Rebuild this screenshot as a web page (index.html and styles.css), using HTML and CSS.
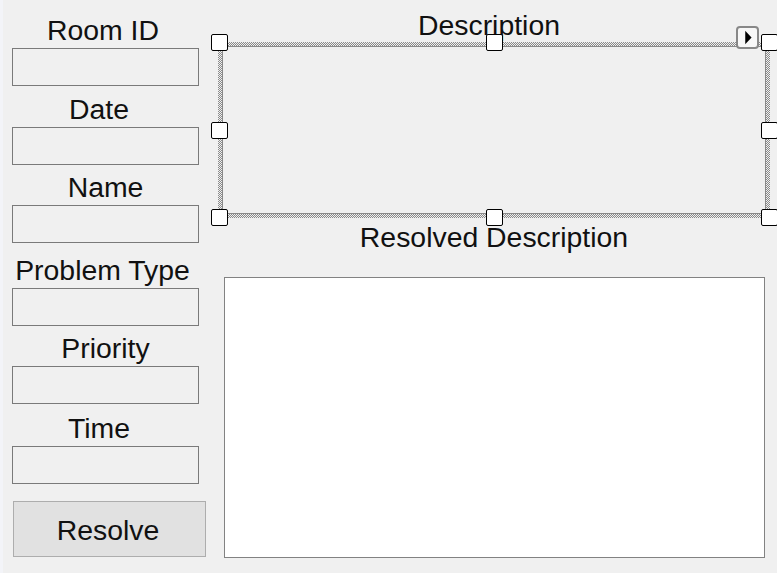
FILE: index.html
```html
<!DOCTYPE html>
<html>
<head>
<meta charset="utf-8">
<link rel="stylesheet" href="styles.css">
</head>
<body>
<div class="form">
  <div class="side">
    <div class="field"><div class="label">Room ID</div><div class="box"></div></div>
    <div class="field"><div class="label">Date</div><div class="box"></div></div>
    <div class="field"><div class="label">Name</div><div class="box"></div></div>
    <div class="field"><div class="label">Problem Type</div><div class="box"></div></div>
    <div class="field"><div class="label">Priority</div><div class="box"></div></div>
    <div class="field"><div class="label">Time</div><div class="box"></div></div>
    <div class="button">Resolve</div>
  </div>
  <div class="main">
    <div class="label desc-label">Description</div>
    <div class="selection">
      <div class="desc-box"></div>
      <div class="handle h-tl"></div>
      <div class="handle h-tm"></div>
      <div class="handle h-tr"></div>
      <div class="handle h-ml"></div>
      <div class="handle h-mr"></div>
      <div class="handle h-bl"></div>
      <div class="handle h-bm"></div>
      <div class="handle h-br"></div>
      <div class="smart-tag">
        <svg width="21" height="21" viewBox="0 0 21 21"><path d="M8 3 L15 10.5 L8 18 Z" fill="#000"/></svg>
      </div>
    </div>
    <div class="label res-label">Resolved Description</div>
    <div class="res-box"></div>
  </div>
</div>
</body>
</html>
```

FILE: styles.css
```css
html, body {
  margin: 0;
  padding: 0;
  background: #f0f0f0;
}
body {
  width: 777px;
  height: 573px;
  overflow: hidden;
  font-family: "Liberation Sans", Arial, sans-serif;
  font-size: 28.4px;
  color: #111;
  border-left: 3px solid #f3f4f8;
  box-sizing: border-box;
}
.form {
  display: flex;
  align-items: flex-start;
}
.side {
  width: 194px;
  margin-left: 9px;
  padding-top: 13px;
  display: flex;
  flex-direction: column;
}
.label {
  height: 31px;
  padding-top: 1px;
  line-height: 32px;
  text-align: center;
  white-space: nowrap;
}
.field {
  width: 187px;
  display: flex;
  flex-direction: column;
}
.field:nth-child(2) { margin-top: 6px; }
.field:nth-child(3) { margin-top: 5px; }
.field:nth-child(4) { margin-top: 10px; }
.field:nth-child(5) { margin-top: 5px; }
.field:nth-child(6) { margin-top: 7px; }
.field:nth-child(1) .label { padding-right: 5px; }
.field:nth-child(2) .label { padding-right: 13px; }
.field:nth-child(4) .label { padding-right: 6px; }
.field:nth-child(6) .label { padding-right: 13px; }
.box {
  margin-top: 3px;
  height: 38px;
  border: 1px solid #7a7a7a;
  background: #f0f0f0;
  box-sizing: border-box;
}
.button {
  margin-top: 17px;
  margin-left: 1px;
  width: 193px;
  height: 56px;
  box-sizing: border-box;
  border: 1px solid #adadad;
  background: #e1e1e1;
  display: flex;
  align-items: center;
  justify-content: center;
  padding-top: 2px;
  padding-right: 3px;
}
.main {
  margin-left: 12px;
  padding-top: 7px;
  width: 552px;
  display: flex;
  flex-direction: column;
}
.desc-label {
  height: 30px;
  padding-top: 2px;
  padding-right: 10px;
}
.selection {
  position: relative;
  margin-top: 3px;
  height: 176px;
  padding: 4px;
  box-sizing: border-box;
  background: repeating-conic-gradient(#8a8a8a 0 25%, #f0f0f0 0 50%) 0 0 / 2px 2px;
}
.desc-box {
  height: 100%;
  border: 1px solid #8a8a8a;
  background: #f0f0f0;
  box-sizing: border-box;
}
.handle {
  position: absolute;
  width: 17px;
  height: 17px;
  box-sizing: border-box;
  border: 1px solid #000;
  border-radius: 2px;
  background: #fff;
}
.h-tl { left: -7px; top: -8px; }
.h-tm { left: calc(50% - 8px); top: -8px; }
.h-tr { right: -8px; top: -8px; }
.h-ml { left: -7px; top: calc(50% - 8px); }
.h-mr { right: -8px; top: calc(50% - 8px); }
.h-bl { left: -7px; bottom: -8px; }
.h-bm { left: calc(50% - 8px); bottom: -8px; }
.h-br { right: -8px; bottom: -8px; }
.smart-tag {
  position: absolute;
  right: 11px;
  top: -16px;
  width: 23px;
  height: 23px;
  box-sizing: border-box;
  border: 2px solid #888;
  border-radius: 4px;
  background: #f7f7f7;
  display: flex;
  align-items: center;
  justify-content: center;
}
.smart-tag svg {
  display: block;
}
.res-label {
  height: 30px;
  padding-top: 2px;
  margin-top: 1px;
}
.res-box {
  margin-top: 26px;
  margin-left: 6px;
  width: 541px;
  height: 281px;
  box-sizing: border-box;
  border: 1px solid #828282;
  background: #fff;
}
```
